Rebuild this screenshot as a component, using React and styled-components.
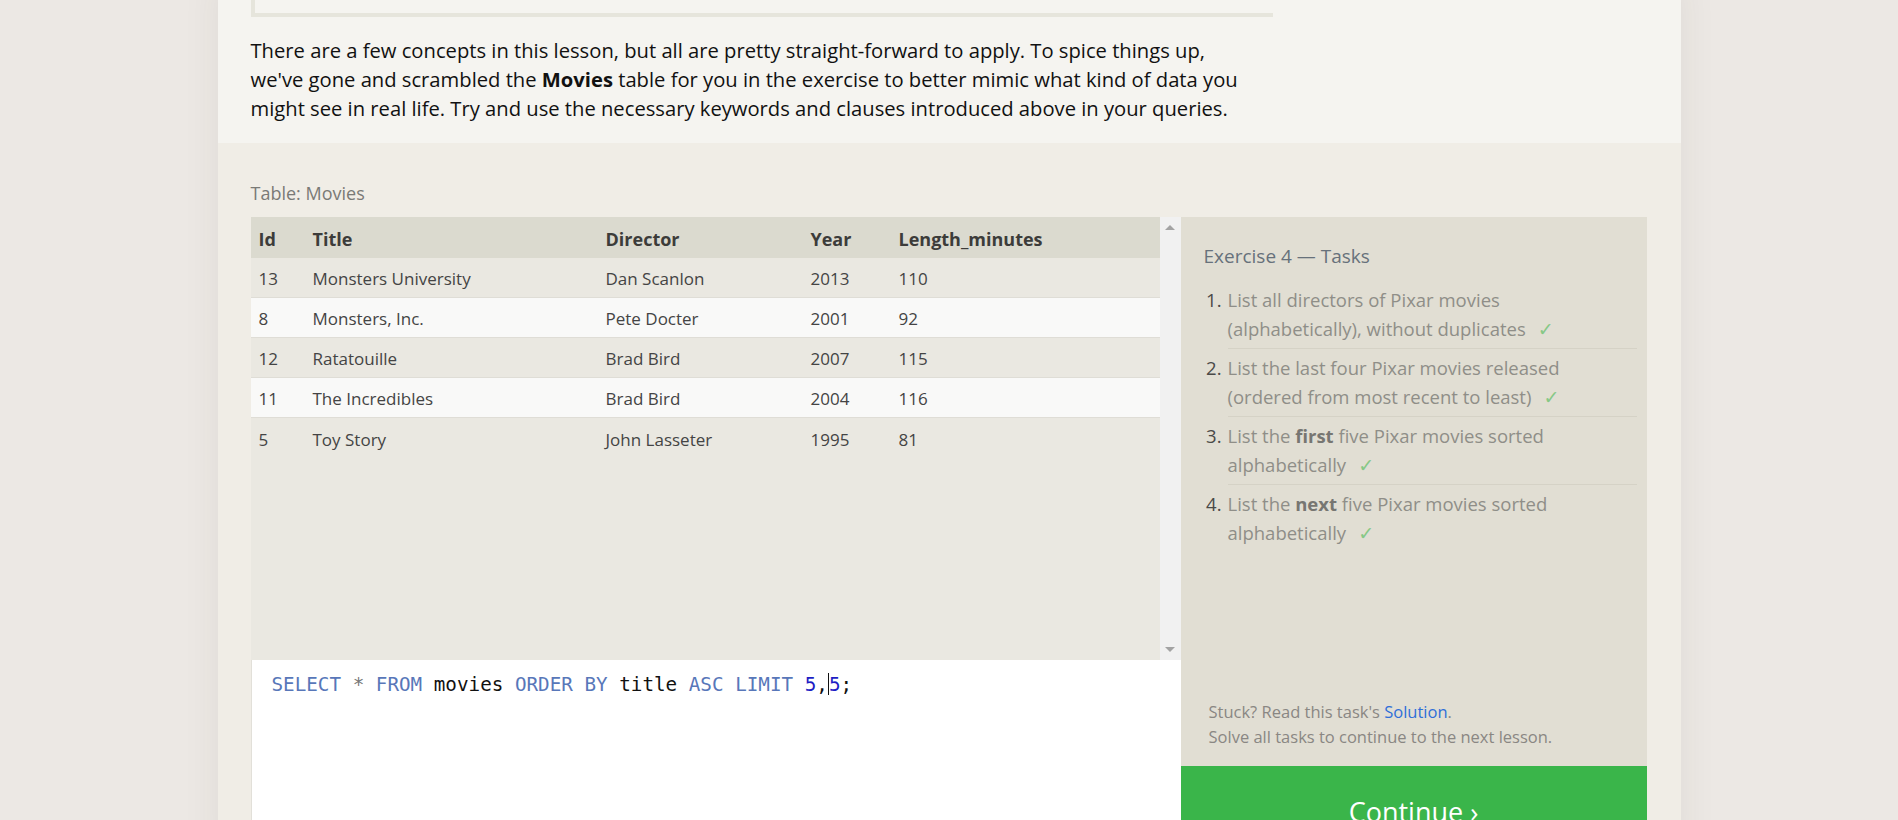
import React from 'react';
import styled, { createGlobalStyle } from 'styled-components';

const GlobalStyle = createGlobalStyle`
  *,
  *:before,
  *:after {
    box-sizing: border-box;
  }

  body {
    margin: 0;
    padding: 0;
    overflow: hidden;
    background: #ece8e4;
    font-family: 'Open Sans', 'Noto Sans', sans-serif;
    color: #222;
  }
`;

const Card = styled.div`
  width: 1463px;
  margin: 0 auto;
  box-shadow: 0 0 36px rgba(60, 50, 40, 0.07);
`;

const Intro = styled.section`
  background: #f5f4f0;
  padding: 0 33px 20px;
`;

const Quote = styled.div`
  width: 1022px;
  margin-top: -21px;
  padding: 0 20px 10px;
  border-left: 4px solid #e6e5dc;
  border-bottom: 4px solid #e6e5dc;
  font-family: 'Liberation Mono', monospace;
  font-size: 15px;
  line-height: 24px;
  color: #999;
`;

const Paragraph = styled.p`
  width: 1010px;
  margin: 19px 0 0;
  font-size: 20.2px;
  line-height: 29px;
  color: #111;

  strong {
    font-weight: 700;
  }
`;

const Exercise = styled.section`
  background: #f0ede6;
  padding: 38px 34px 0 33px;
`;

const Caption = styled.div`
  font-size: 18px;
  line-height: 24px;
  color: #7a7a76;
  margin-bottom: 12px;
`;

const Workspace = styled.div`
  display: flex;
  align-items: stretch;
`;

const LeftColumn = styled.div`
  width: 930px;
  display: flex;
  flex-direction: column;
`;

const Viewport = styled.div`
  display: flex;
  height: 443px;
  background: #eae8e1;
`;

const Table = styled.div`
  flex: 1;
`;

const Row = styled.div`
  display: grid;
  grid-template-columns: 54px 293px 205px 88px 1fr;
  height: ${p => (p.head ? '41px' : '40px')};
  padding-top: 2px;
  align-items: center;
  background: ${p => (p.head ? '#dbdacf' : p.even ? '#f9f9f8' : '#eae8e1')};
  border-bottom: ${p => (p.last || p.head ? 'none' : '1px solid #dfddd6')};
  font-size: ${p => (p.head ? '18px' : '17px')};
  font-weight: ${p => (p.head ? 700 : 400)};
  color: ${p => (p.head ? '#3c3c3a' : '#444')};
`;

const Cell = styled.div`
  padding-left: 8px;
  white-space: nowrap;
`;

const Scrollbar = styled.div`
  width: 21px;
  background: #f1f1f1;
  display: flex;
  flex-direction: column;
  justify-content: space-between;
  align-items: center;
  padding: 8px 0 8px;
`;

const Arrow = styled.div`
  width: 0;
  height: 0;
  border-left: 5px solid transparent;
  border-right: 5px solid transparent;
  ${p =>
    p.down
      ? 'border-top: 5px solid #a3a3a3;'
      : 'border-bottom: 5px solid #a3a3a3;'}
`;

const Editor = styled.div`
  flex: 1;
  min-height: 196px;
  background: #fff;
  border-left: 1px solid #e2e0d9;
  padding: 13px 20px;
  font-family: 'DejaVu Sans Mono', 'Liberation Mono', monospace;
  font-size: 19.25px;
  line-height: 24px;
  white-space: pre;
  color: #111;
`;

const Token = styled.span`
  color: ${p =>
    p.kind === 'kw' ? '#5877b9' : p.kind === 'num' ? '#1d1dc4' : p.kind === 'op' ? '#777' : '#111'};
`;

const Caret = styled.span`
  display: inline-block;
  width: 0;
  height: 22px;
  vertical-align: -4px;
  border-left: 1px solid #111;
`;

const Panel = styled.aside`
  width: 466px;
  background: #e1ded3;
  display: flex;
  flex-direction: column;
`;

const PanelBody = styled.div`
  flex: 1;
  padding: 26px 10px 0 23px;
  display: flex;
  flex-direction: column;
`;

const PanelTitle = styled.h3`
  margin: 0 0 17px;
  font-size: 19px;
  line-height: 26px;
  font-weight: 400;
  color: #67717b;
`;

const TaskList = styled.ol`
  margin: 0;
  padding: 0;
  list-style: none;
`;

const Task = styled.li`
  display: flex;
  gap: 6px;
  font-size: 18.5px;
  line-height: 28.5px;
  color: #8f8e88;

  strong {
    color: #777672;
    font-weight: 700;
  }
`;

const TaskNum = styled.span`
  width: 18px;
  text-align: right;
  flex-shrink: 0;
  color: #4a4a48;
`;

const TaskText = styled.div`
  flex: 1;
  padding-bottom: 5px;
  margin-bottom: 5px;
  border-bottom: ${p => (p.last ? 'none' : '1px solid #d5d2c6')};
`;

const Check = styled.span`
  margin-left: 12px;
  color: #86c886;
  font-family: 'DejaVu Sans', sans-serif;
  font-size: 19px;
`;

const Footer = styled.div`
  margin-top: auto;
  padding: 0 0 17px 5px;
  font-size: 16.5px;
  line-height: 25px;
  color: #8a8783;

  a {
    color: #2f6fd8;
    text-decoration: none;
  }
`;

const ContinueButton = styled.button`
  display: block;
  width: 100%;
  height: 90px;
  border: none;
  background: #3ab54a;
  color: #fff;
  font-family: inherit;
  font-size: 27px;
  cursor: pointer;
`;

const movies = [
  [13, 'Monsters University', 'Dan Scanlon', 2013, 110],
  [8, 'Monsters, Inc.', 'Pete Docter', 2001, 92],
  [12, 'Ratatouille', 'Brad Bird', 2007, 115],
  [11, 'The Incredibles', 'Brad Bird', 2004, 116],
  [5, 'Toy Story', 'John Lasseter', 1995, 81],
];

const tasks = [
  <>List all directors of Pixar movies (alphabetically), without duplicates</>,
  <>List the last four Pixar movies released (ordered from most recent to least)</>,
  <>List the <strong>first</strong> five Pixar movies sorted alphabetically</>,
  <>List the <strong>next</strong> five Pixar movies sorted alphabetically</>,
];

const App = () => (
  <React.Fragment>
    <GlobalStyle />
    <Card>
      <Intro>
        <Quote>SELECT column, another_column FROM mytable LIMIT num_limit;</Quote>
        <Paragraph>
          There are a few concepts in this lesson, but all are pretty straight-forward to apply. To spice
          things up, we've gone and scrambled the <strong>Movies</strong> table for you in the exercise to
          better mimic what kind of data you might see in real life. Try and use the necessary keywords and
          clauses introduced above in your queries.
        </Paragraph>
      </Intro>

      <Exercise>
        <Caption>Table: Movies</Caption>
        <Workspace>
          <LeftColumn>
            <Viewport>
              <Table>
                <Row head>
                  <Cell>Id</Cell>
                  <Cell>Title</Cell>
                  <Cell>Director</Cell>
                  <Cell>Year</Cell>
                  <Cell>Length_minutes</Cell>
                </Row>
                {movies.map((m, i) => (
                  <Row key={m[0]} even={i % 2 === 1} last={i === movies.length - 1}>
                    {m.map((v, j) => (
                      <Cell key={j}>{v}</Cell>
                    ))}
                  </Row>
                ))}
              </Table>
              <Scrollbar>
                <Arrow />
                <Arrow down />
              </Scrollbar>
            </Viewport>
            <Editor>
              <Token kind="kw">SELECT</Token> <Token kind="op">*</Token> <Token kind="kw">FROM</Token> movies{' '}
              <Token kind="kw">ORDER BY</Token> title <Token kind="kw">ASC</Token> <Token kind="kw">LIMIT</Token>{' '}
              <Token kind="num">5</Token>,<Caret />
              <Token kind="num">5</Token>;
            </Editor>
          </LeftColumn>

          <Panel>
            <PanelBody>
              <PanelTitle>Exercise 4 — Tasks</PanelTitle>
              <TaskList>
                {tasks.map((t, i) => (
                  <Task key={i}>
                    <TaskNum>{i + 1}.</TaskNum>
                    <TaskText last={i === tasks.length - 1}>
                      {t}
                      <Check>✓</Check>
                    </TaskText>
                  </Task>
                ))}
              </TaskList>
              <Footer>
                Stuck? Read this task's <a href="#">Solution</a>.
                <br />
                Solve all tasks to continue to the next lesson.
              </Footer>
            </PanelBody>
            <ContinueButton>Continue ›</ContinueButton>
          </Panel>
        </Workspace>
      </Exercise>
    </Card>
  </React.Fragment>
);

export default App;
